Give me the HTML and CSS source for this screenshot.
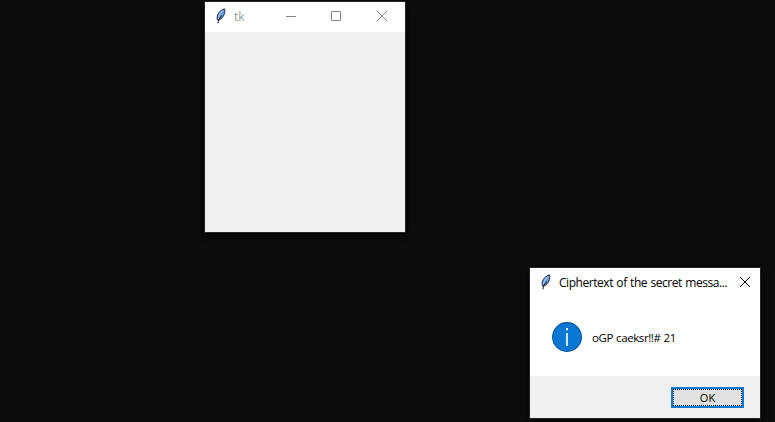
FILE: index.html
```
<!DOCTYPE html>
<html lang="en">
<head>
<meta charset="utf-8">
<title>tk</title>
<link rel="stylesheet" href="styles.css">
</head>
<body>
<svg class="defs" width="0" height="0" aria-hidden="true">
  <symbol id="feather" viewBox="0 0 12 16">
    <path d="M2.4 11.8C1.2 8 3.4 3 9.4 .8C10.8 4.5 8.4 10 4.2 12Z" fill="#6a9ad6" stroke="#1d2c4a" stroke-width="1"/>
    <path d="M7.6 2.8C5 5 3.8 7.8 3.4 10.5" fill="none" stroke="#a9caf0" stroke-width="1.1"/>
    <path d="M6.6 7.5L3.4 12L3 15.3" fill="none" stroke="#10131b" stroke-width="1"/>
  </symbol>
</svg>
<main class="desktop">
  <section class="window main-window">
    <header class="titlebar">
      <svg class="feather"><use href="#feather"/></svg>
      <span class="title">tk</span>
      <div class="controls">
        <svg viewBox="0 0 12 12"><path d="M1 6.5H11"/></svg>
        <svg viewBox="0 0 12 12"><path d="M1.5 1.5H10.5V10.5H1.5Z"/></svg>
        <svg viewBox="0 0 12 12"><path d="M1 1L11 11M11 1L1 11"/></svg>
      </div>
    </header>
  </section>
  <section class="window dialog">
    <header class="titlebar">
      <svg class="feather"><use href="#feather"/></svg>
      <span class="title">Ciphertext of the secret messa...</span>
      <svg class="close" viewBox="0 0 12 12"><path d="M1 1L11 11M11 1L1 11"/></svg>
    </header>
    <div class="message">
      <svg class="info" viewBox="0 0 30 30">
        <circle cx="15" cy="15" r="14.4" fill="#0878d4" stroke="#09599e" stroke-width="1.1"/>
        <path d="M14 6H16V8.3H14ZM14.2 11H15.8V24H14.2Z" fill="#fff"/>
      </svg>
      <span class="text">oGP caeksr!!# 21</span>
    </div>
    <footer class="footer"><button class="ok"><span>OK</span></button></footer>
  </section>
</main>
</body>
</html>
```
FILE: styles.css
```
* { box-sizing: border-box; }
body { margin: 0; background: #0c0c0c; font-family: "Open Sans", "Noto Sans", sans-serif; font-size: 12px; }
.defs { position: absolute; }
.desktop { position: relative; width: 775px; height: 422px; overflow: hidden; }
.window { position: absolute; display: flex; flex-direction: column; background: #f0f0f0; box-shadow: 0 0 0 1px #252525, 0 2px 8px #000; }
.main-window { left: 205px; top: 2px; width: 200px; height: 230px; }
.dialog { left: 530px; top: 268px; width: 230px; height: 150px; }
.titlebar { display: flex; align-items: center; height: 30px; padding: 0 10px; background: #fff; flex: none; }
.feather { width: 12px; height: 16px; flex: none; margin-top: -2px; }
.title { margin-left: 7px; white-space: nowrap; line-height: 16px; }
.main-window .title { color: #999; }
.controls { display: flex; gap: 33px; margin-left: auto; margin-right: 7px; margin-top: -2px; }
.controls svg:nth-child(2) { margin: 0 1px 0 0; }
.controls svg, .close { display: block; width: 12px; height: 12px; fill: none; stroke: #888; }
.titlebar .close { stroke: #000; margin-left: auto; margin-right: -1px; margin-top: -2px; flex: none; }
.dialog .title { letter-spacing: -0.45px; word-spacing: 0.7px; }
.message { display: flex; align-items: center; height: 78px; padding-left: 22px; background: #fff; }
.info { width: 30px; height: 30px; }
.text { margin-left: 10px; font-size: 11.5px; letter-spacing: -0.42px; word-spacing: 0.6px; }
.footer { display: flex; justify-content: flex-end; height: 42px; padding: 11px 16px 0; }
.ok { width: 73px; height: 21px; padding: 0; border: 2px solid #0878d4; background: #e1e1e1; font: 11px/15px "Open Sans", sans-serif; color: #000; }
.ok span { display: block; height: 17px; border: 1px dotted #000; }
```
